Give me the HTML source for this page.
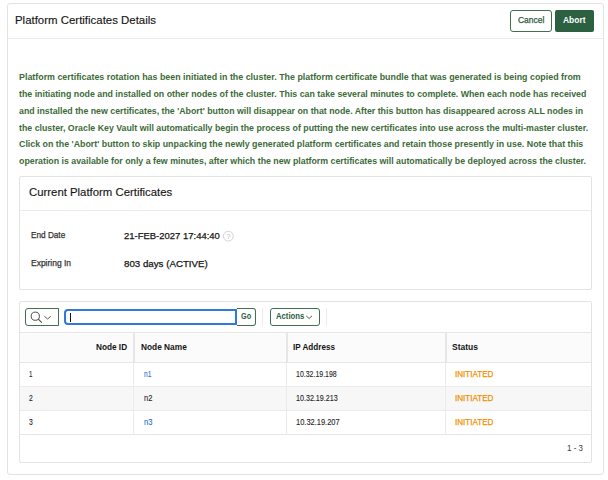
<!DOCTYPE html>
<html><head><meta charset="utf-8">
<style>
html,body{margin:0;padding:0;background:#fff;width:608px;height:480px;overflow:hidden;}
body{font-family:"Liberation Sans",sans-serif;color:#161513;position:relative;}
.b{position:absolute;box-sizing:border-box;}
.t{position:absolute;white-space:nowrap;transform-origin:0 0;}
svg{position:absolute;left:0;top:0;}
</style></head><body>
<!-- outer panel -->
<div class="b" style="left:7px;top:3px;width:597px;height:472px;border:1px solid #e3e3e3;border-radius:3px;"></div>
<div class="b" style="left:8px;top:38px;width:595px;height:1px;background:#ebebeb;"></div>
<!-- buttons -->
<div class="b" style="left:510px;top:10px;width:42px;height:22px;border:1px solid #3f6f4e;border-radius:3px;"></div>
<div class="b" style="left:555px;top:10px;width:39px;height:22px;background:#2b6141;border-radius:2px;"></div>

<!-- current certs panel -->
<div class="b" style="left:19px;top:176px;width:573px;height:114px;border:1px solid #e3e3e3;border-radius:2px;"></div>
<div class="b" style="left:20px;top:210px;width:571px;height:1px;background:#ebebeb;"></div>
<svg width="608" height="480" style="pointer-events:none">
 <circle cx="228.3" cy="236.2" r="4.9" fill="none" stroke="#d2d2da" stroke-width="1"/>
 <text x="228.4" y="239" text-anchor="middle" font-family="Liberation Sans" font-size="7.2" fill="#b4b4bc">?</text>
</svg>

<!-- table panel -->
<div class="b" style="left:19px;top:301px;width:573px;height:162px;border:1px solid #e3e3e3;border-radius:2px;"></div>
<!-- toolbar -->
<div class="b" style="left:25px;top:308px;width:34px;height:18px;border:1px solid #3f6f4e;border-radius:3px 0 0 3px;"></div>
<svg width="608" height="480">
 <circle cx="35.3" cy="316.2" r="4.1" fill="none" stroke="#4a4a4a" stroke-width="1"/>
 <line x1="38.3" y1="319.2" x2="41.8" y2="322.7" stroke="#4a4a4a" stroke-width="1.1"/>
 <polyline points="44.4,316.3 47.6,319 50.8,316.3" fill="none" stroke="#4a4a4a" stroke-width="0.9"/>
 <polyline points="306.2,315.9 309.1,318.5 312,315.9" fill="none" stroke="#2b5b3c" stroke-width="0.9"/>
</svg>
<div class="b" style="left:64px;top:309px;width:173px;height:16px;border:2px solid #2f78dc;border-radius:4px 0 0 4px;"></div>
<div class="b" style="left:70px;top:313px;width:1px;height:9px;background:#111;"></div>
<div class="b" style="left:237px;top:308px;width:19px;height:18px;border:1px solid #3f6f4e;border-left:none;border-radius:0 3px 3px 0;"></div>
<div class="b" style="left:262px;top:308px;width:1px;height:18px;background:#ececec;"></div>
<div class="b" style="left:270px;top:308px;width:50px;height:18px;border:1px solid #3f6f4e;border-radius:3px;"></div>
<div class="b" style="left:326px;top:308px;width:1px;height:18px;background:#ececec;"></div>

<!-- table -->
<div class="b" style="left:20px;top:332px;width:571px;height:31px;background:#fbfbfb;border-top:1px solid #e6e6e6;border-bottom:1px solid #e6e6e6;"></div>
<div class="b" style="left:20px;top:386px;width:571px;height:24px;background:#f7f7f7;"></div>
<div class="b" style="left:20px;top:386px;width:571px;height:1px;background:#ebebeb;"></div>
<div class="b" style="left:20px;top:410px;width:571px;height:1px;background:#ebebeb;"></div>
<div class="b" style="left:20px;top:434px;width:571px;height:1px;background:#e6e6e6;"></div>
<div class="b" style="left:133px;top:332px;width:2px;height:31px;background:#e6e6e6;"></div>
<div class="b" style="left:286px;top:332px;width:2px;height:31px;background:#e6e6e6;"></div>
<div class="b" style="left:445px;top:332px;width:2px;height:31px;background:#e6e6e6;"></div>
<div class="b" style="left:133px;top:363px;width:1px;height:72px;background:#ebebeb;"></div>
<div class="b" style="left:286px;top:363px;width:1px;height:72px;background:#ebebeb;"></div>
<div class="b" style="left:445px;top:363px;width:1px;height:72px;background:#ebebeb;"></div>
<div class="t" style="left:15px;top:14px;font-size:11.6px;line-height:11.6px;font-weight:normal;color:#161513;transform:scaleX(0.9859);-webkit-text-stroke:0.15px currentColor;">Platform Certificates Details</div>
<div class="t" style="left:518px;top:16px;font-size:8.8px;line-height:8.8px;font-weight:normal;color:#2b5b3c;transform:scaleX(0.9630);-webkit-text-stroke:0.25px currentColor;">Cancel</div>
<div class="t" style="left:563px;top:16px;font-size:8.8px;line-height:8.8px;font-weight:bold;color:#ffffff;transform:scaleX(0.9583);">Abort</div>
<div class="t" style="left:19px;top:72px;font-size:9.6px;line-height:9.6px;font-weight:bold;color:#3c6b38;transform:scaleX(0.9243);">Platform certificates rotation has been initiated in the cluster. The platform certificate bundle that was generated is being copied from</div>
<div class="t" style="left:19px;top:89px;font-size:9.6px;line-height:9.6px;font-weight:bold;color:#3c6b38;transform:scaleX(0.9175);">the initiating node and installed on other nodes of the cluster. This can take several minutes to complete. When each node has received</div>
<div class="t" style="left:19px;top:106px;font-size:9.6px;line-height:9.6px;font-weight:bold;color:#3c6b38;transform:scaleX(0.9156);">and installed the new certificates, the 'Abort' button will disappear on that node. After this button has disappeared across ALL nodes in</div>
<div class="t" style="left:19px;top:123px;font-size:9.6px;line-height:9.6px;font-weight:bold;color:#3c6b38;transform:scaleX(0.9163);">the cluster, Oracle Key Vault will automatically begin the process of putting the new certificates into use across the multi-master cluster.</div>
<div class="t" style="left:19px;top:139px;font-size:9.6px;line-height:9.6px;font-weight:bold;color:#3c6b38;transform:scaleX(0.9216);">Click on the 'Abort' button to skip unpacking the newly generated platform certificates and retain those presently in use. Note that this</div>
<div class="t" style="left:19px;top:156px;font-size:9.6px;line-height:9.6px;font-weight:bold;color:#3c6b38;transform:scaleX(0.9175);">operation is available for only a few minutes, after which the new platform certificates will automatically be deployed across the cluster.</div>
<div class="t" style="left:29px;top:186px;font-size:11.6px;line-height:11.6px;font-weight:normal;color:#161513;transform:scaleX(0.9795);-webkit-text-stroke:0.15px currentColor;">Current Platform Certificates</div>
<div class="t" style="left:31px;top:231px;font-size:8.7px;line-height:8.7px;font-weight:normal;color:#333333;transform:scaleX(0.9444);-webkit-text-stroke:0.25px currentColor;">End Date</div>
<div class="t" style="left:124px;top:231px;font-size:9.4px;line-height:9.4px;font-weight:normal;color:#161513;transform:scaleX(1.0105);-webkit-text-stroke:0.25px currentColor;">21-FEB-2027 17:44:40</div>
<div class="t" style="left:31px;top:259px;font-size:8.7px;line-height:8.7px;font-weight:normal;color:#333333;transform:scaleX(0.9756);-webkit-text-stroke:0.25px currentColor;">Expiring In</div>
<div class="t" style="left:124px;top:259px;font-size:9.4px;line-height:9.4px;font-weight:normal;color:#161513;transform:scaleX(1.0372);-webkit-text-stroke:0.25px currentColor;">803 days (ACTIVE)</div>
<div class="t" style="left:241px;top:312px;font-size:8.8px;line-height:8.8px;font-weight:bold;color:#2b5b3c;transform:scaleX(0.8333);">Go</div>
<div class="t" style="left:276px;top:312px;font-size:8.8px;line-height:8.8px;font-weight:bold;color:#2b5b3c;transform:scaleX(0.8750);">Actions</div>
<div class="t" style="left:96px;top:343px;font-size:8.5px;line-height:8.5px;font-weight:bold;color:#161513;transform:scaleX(0.9688);">Node ID</div>
<div class="t" style="left:141px;top:343px;font-size:8.5px;line-height:8.5px;font-weight:bold;color:#161513;transform:scaleX(0.9787);">Node Name</div>
<div class="t" style="left:293px;top:343px;font-size:8.5px;line-height:8.5px;font-weight:bold;color:#161513;transform:scaleX(0.9545);">IP Address</div>
<div class="t" style="left:452px;top:343px;font-size:8.5px;line-height:8.5px;font-weight:bold;color:#161513;transform:scaleX(1.0000);">Status</div>
<div class="t" style="left:29px;top:370px;font-size:8.5px;line-height:8.5px;font-weight:normal;color:#222222;transform:scaleX(0.7200);-webkit-text-stroke:0.1px currentColor;">1</div>
<div class="t" style="left:144px;top:370px;font-size:8.5px;line-height:8.5px;font-weight:normal;color:#1d72d0;transform:scaleX(0.7778);-webkit-text-stroke:0.1px currentColor;">n1</div>
<div class="t" style="left:296px;top:370px;font-size:8.5px;line-height:8.5px;font-weight:normal;color:#222222;transform:scaleX(0.8200);-webkit-text-stroke:0.1px currentColor;">10.32.19.198</div>
<div class="t" style="left:455px;top:370px;font-size:8.5px;line-height:8.5px;font-weight:normal;color:#f09000;transform:scaleX(0.9500);-webkit-text-stroke:0.25px currentColor;">INITIATED</div>
<div class="t" style="left:29px;top:394px;font-size:8.5px;line-height:8.5px;font-weight:normal;color:#222222;transform:scaleX(0.8000);-webkit-text-stroke:0.1px currentColor;">2</div>
<div class="t" style="left:144px;top:394px;font-size:8.5px;line-height:8.5px;font-weight:normal;color:#222222;transform:scaleX(0.8889);-webkit-text-stroke:0.1px currentColor;">n2</div>
<div class="t" style="left:296px;top:394px;font-size:8.5px;line-height:8.5px;font-weight:normal;color:#222222;transform:scaleX(0.8400);-webkit-text-stroke:0.1px currentColor;">10.32.19.213</div>
<div class="t" style="left:455px;top:394px;font-size:8.5px;line-height:8.5px;font-weight:normal;color:#f09000;transform:scaleX(0.9500);-webkit-text-stroke:0.25px currentColor;">INITIATED</div>
<div class="t" style="left:29px;top:418px;font-size:8.5px;line-height:8.5px;font-weight:normal;color:#222222;transform:scaleX(0.8000);-webkit-text-stroke:0.1px currentColor;">3</div>
<div class="t" style="left:144px;top:418px;font-size:8.5px;line-height:8.5px;font-weight:normal;color:#1d72d0;transform:scaleX(0.8889);-webkit-text-stroke:0.1px currentColor;">n3</div>
<div class="t" style="left:296px;top:418px;font-size:8.5px;line-height:8.5px;font-weight:normal;color:#222222;transform:scaleX(0.8800);-webkit-text-stroke:0.1px currentColor;">10.32.19.207</div>
<div class="t" style="left:455px;top:418px;font-size:8.5px;line-height:8.5px;font-weight:normal;color:#f09000;transform:scaleX(0.9500);-webkit-text-stroke:0.25px currentColor;">INITIATED</div>
<div class="t" style="left:567px;top:444px;font-size:8.5px;line-height:8.5px;font-weight:normal;color:#3a3a3a;transform:scaleX(0.9412);">1 - 3</div>
</body></html>
